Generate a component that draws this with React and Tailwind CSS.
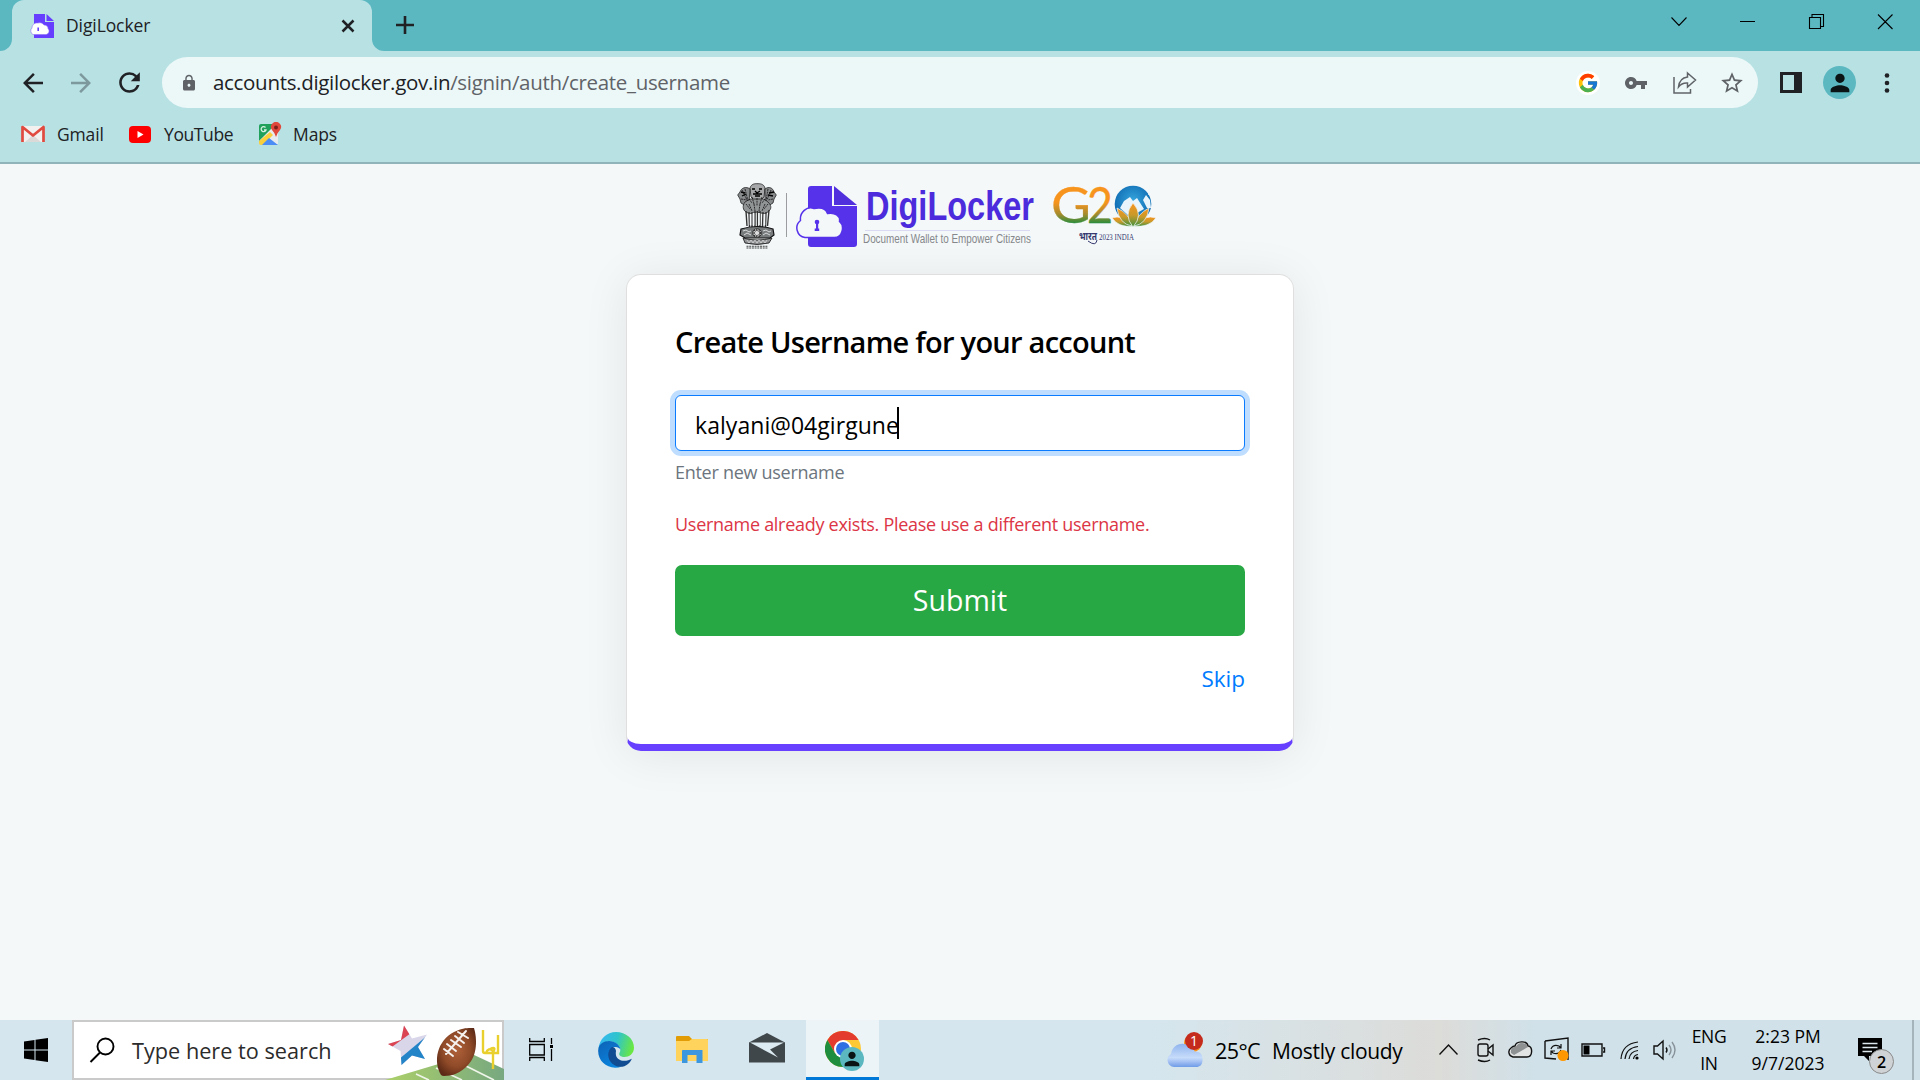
import { MdArrowBack, MdArrowForward, MdRefresh, MdLock, MdVpnKey, MdStarBorder, MdPerson } from "react-icons/md";
import { FcGoogle } from "react-icons/fc";

function DigiMark({ className }) {
  return (
    <svg className={className} viewBox="0 0 63 63">
      <path d="M16 1H37V21H62V59a3 3 0 0 1-3 3H16a3 3 0 0 1-3-3V4a3 3 0 0 1 3-3Z" fill="#5632ea" />
      <path d="M39 1 62 20H39Z" fill="#5030dd" />
      <path d="M10 52.500A9.600 9.600 0 0 1 5.500 35.500C4.500 27 12 21 19 23.500 26 22 31 24 32.500 28.500 40 27 45.500 31 44.500 36.500 50 41 47.500 52.500 39.500 52.500Z" fill="#f4f8f9" stroke="#5632ea" strokeWidth="1.500" />
      <circle cx="22" cy="37" r="2.300" fill="#5632ea" />
      <path d="M21 38h2.200v5.500h1V46h-4.500v-2.500H21Z" fill="#5632ea" />
    </svg>
  );
}

function Favicon() {
  return (
    <svg className="size-6 shrink-0" viewBox="0 0 24 24">
      <path d="M4 0H15V8H24V24H4Z" fill="#653eff" />
      <path d="M16.500 0 24 7H16.500Z" fill="#653eff" />
      <path d="M3 20.500A4 4 0 0 1 2 14C2 10.500 5 8.500 8 9c3-1 5 .5 6 2 3 0 4 2 4 3.500 2 2 1 6-2 6Z" fill="#fff" stroke="#8b70f5" strokeWidth=".6" />
      <path d="M8.200 13.500V17" stroke="#653eff" strokeWidth="1.600" />
    </svg>
  );
}

function Emblem() {
  return (
    <svg className="-mt-px h-[66px] w-10" viewBox="0 0 40 66" fill="none" stroke="#222" strokeWidth=".8">
      <path d="M13 5C14 1 18 .5 20 .7 23 .5 27 1 28 5L27 14 24 17H17L14 14Z" fill="#a5a7a8" />
      <path d="M13 6C9 3 4 5 3 9L.7 12 3 16 4 20 9 23 12 20ZM28 6c4-3 8-1 9 3l2.300 3L37 16l-1 4-5 3-3-3Z" fill="#888b8c" />
      <path d="M8 19C5 23 6 27 9 29L13 31 20 29 28 31 32 28C35 25 34 22 31 19L27 16H13Z" fill="#929596" />
      <path d="M15 6h3M22 6h3M18 8l2 2 3-2M16 11h9M18 13h5M4 9l4 1M5 13l4-2M32 10l5-1M31 12l5 1" stroke="#000" strokeWidth="1.300" />
      <path d="M5 7l5 10M8 6l3 12M4 16l6 1M34 7l-4 10M31 6l-2 12M36 16l-5 1M12 16l3 4M15 14l2 7M28 16l-3 4M25 14l-2 7M20 15v8M9 21l4 5M31 21l-4 5M12 21l3 7M28 21l-3 7M17 21l1 7M23 21l-1 7" stroke="#111" strokeDasharray="2 .7" />
      <path d="M9 28 10 43M12 29 12.500 44M15 29 15 44M18 28 18 44M20.500 28V44M23 28V44M26 29 25.500 44M29 29 28.500 44M32 27 30.500 43" stroke="#333" strokeWidth="1.400" />
      <path d="M13.500 31v11M16.500 30v12M22 30v12M27.500 31v11" stroke="#f4f8f9" strokeWidth="1.500" />
      <path d="M4 46Q20 41 36 46L37 52 33 55H8L3 52Z" fill="#777b7c" stroke="#111" strokeWidth="1.200" />
      <circle cx="20" cy="50" r="4.400" fill="#ddd" />
      <circle cx="20" cy="50" r="3" strokeDasharray=".8 .8" strokeWidth="2" />
      <path d="M6 48l3-1 3 2 2-1M7 52l3-2 4 2M26 48l3-1 3 2 2-1M26 52l3-2 4 2" stroke="#f2f2f2" />
      <path d="M6 55Q20 59 35 55L32 60Q20 63 8 60Z" fill="#909394" stroke="#111" />
      <path d="M10 57l2 3 2-3 2 3 2-3 2 3 2-3 2 3 2-3 2 3 2-3" stroke="#f2f2f2" strokeWidth=".6" />
      <path d="M9.500 63.300h21M9.500 65h21" stroke="#444" strokeDasharray="2 .7" strokeWidth="1.100" />
    </svg>
  );
}

function Wordmark() {
  return (
    <svg className="h-[70px] w-[174px] overflow-visible" viewBox="0 0 174 70" fontFamily="'Liberation Sans', Arial, sans-serif">
      <text x="3" y="38" fontSize="40" fontWeight="700" fill="#4b2bdc" textLength="168" lengthAdjust="spacingAndGlyphs">DigiLocker</text>
      <path d="M2 48.500H167" stroke="#d9d9f2" />
      <text x="0" y="61" fontSize="12.800" fill="#85878a" textLength="168" lengthAdjust="spacingAndGlyphs">Document Wallet to Empower Citizens</text>
    </svg>
  );
}

function G20() {
  return (
    <svg className="h-[70px] w-[104px] overflow-visible" viewBox="0 0 104 70">
      <defs>
        <linearGradient id="g20" gradientUnits="userSpaceOnUse" x1="0" y1="4" x2="0" y2="40">
          <stop offset=".4" stopColor="#f7941e" /><stop offset=".72" stopColor="#a78b2c" /><stop offset="1" stopColor="#1f8d3e" />
        </linearGradient>
        <linearGradient id="petal" x1="0" y1="0" x2="0" y2="1">
          <stop offset="0" stopColor="#f7941e" /><stop offset=".5" stopColor="#c99a2a" /><stop offset="1" stopColor="#3d9140" />
        </linearGradient>
        <radialGradient id="globe" cx=".5" cy=".4" r=".6">
          <stop offset="0" stopColor="#35a4dc" /><stop offset="1" stopColor="#0b66ae" />
        </radialGradient>
      </defs>
      <g fontFamily="Lato, sans-serif" fontSize="51" fontWeight="400" fill="url(#g20)" stroke="url(#g20)" strokeWidth=".3">
        <text x="-2" y="39" textLength="40" lengthAdjust="spacingAndGlyphs">G</text>
        <text x="34" y="39" textLength="26" lengthAdjust="spacingAndGlyphs">2</text>
      </g>
      <circle cx="80" cy="20" r="18.300" fill="url(#globe)" />
      <path d="M67 24 71 17 77 13 80 17 84 14 91 25 84 29 79 25 76 32ZM93 11 97 16 98 24 94 24 92 20 90 16ZM95 8l2 2-2 1Z" fill="#e8f4fb" />
      <g fill="url(#petal)" stroke="#f4f8f9" strokeWidth=".7">
        <path d="M59 34Q69 30 80 42 66 44 59 34ZM103 34Q92 30 80 42 96 44 103 34Z" />
        <path d="M64 24Q77 30 79 42 66 40 64 24ZM96 24Q84 30 81 42 94 40 96 24Z" />
        <path d="M80 19Q91 31 80 43 70 31 80 19Z" />
      </g>
      <g fill="#34386f">
        <text x="26" y="56" fontFamily="'Noto Sans Devanagari', 'Noto Sans', sans-serif" fontSize="10.500" fontWeight="700" textLength="18" lengthAdjust="spacingAndGlyphs">भारत</text>
        <text x="46" y="56" fontFamily="'Liberation Serif', serif" fontSize="8.500" textLength="35" lengthAdjust="spacingAndGlyphs">2023 INDIA</text>
      </g>
      <path d="M35 57Q43 63 44 56" fill="none" stroke="#34386f" />
    </svg>
  );
}

function Gmail() {
  return (
    <svg className="h-[18px] w-6" viewBox="0 0 24 18">
      <path d="M2 1H22V17H2Z" fill="#f2f1ef" /><path d="M4 17 12 10 20 17Z" fill="#dcdad8" />
      <path d="M1.500 17V2L12 10.500 22.500 2V17" fill="none" stroke="#e04a3f" strokeWidth="2.700" strokeLinejoin="round" />
    </svg>
  );
}

function MapsIcon() {
  return (
    <svg className="size-6" viewBox="0 0 24 24">
      <path d="M2 3H20V22H2Z" fill="#e8ebed" /><path d="M1 4Q1 2 3 2H18L1 19Z" fill="#1fa05b" />
      <path d="M1 19 12 10 15 13 5 23H3Q1 23 1 21Z" fill="#f9cf3b" /><path d="M4 23 11 16 20 23Z" fill="#4c8df5" />
      <path d="M7.500 5.500A2.500 2.500 0 1 0 8 8H6" fill="none" stroke="#d6f0df" strokeWidth="1.300" />
      <path d="M18 15Q17 11 14 8A5 5 0 1 1 22 8Q19 11 18 15Z" fill="#e0483c" /><circle cx="18" cy="5.500" r="2" fill="#7c201a" />
    </svg>
  );
}

function Edge() {
  return (
    <svg className="size-9" viewBox="0 0 36 36">
      <defs>
        <linearGradient id="e1" x1="0" y1=".3" x2="1" y2=".5"><stop offset="0" stopColor="#35b7f3" /><stop offset=".5" stopColor="#2fc4cb" /><stop offset="1" stopColor="#6be83f" /></linearGradient>
        <linearGradient id="e2" x1="0" y1="0" x2=".6" y2="1"><stop offset="0" stopColor="#0d62b5" /><stop offset="1" stopColor="#0a84de" /></linearGradient>
      </defs>
      <path d="M.5 17C1 7 9 0 18 0c10 0 18 7 18 15.500C36 22 31 25 26.500 25 22 25 20.500 22.500 21.500 21 25 15 18 9 11 9.500 6 10 2 13 .5 17Z" fill="url(#e1)" />
      <path d="M.2 18C.5 12 6 9 11 9c6 0 11 4 11.500 8.500C20 13.500 13 14 11.500 20 10 28 17 34.500 24 34.500 11 39-.5 30 .2 18Z" fill="url(#e2)" />
      <path d="M14 15C10 18 9 24 12 29c4 6 12 8 18 3 2-1.500 3.500-4 3.800-5.200C28 30.500 16 30 18 19c0-2-2-4.500-4-4Z" fill="#114b91" />
    </svg>
  );
}

function Chrome() {
  return (
    <svg className="size-9" viewBox="0 0 36 36">
      <circle cx="18" cy="18" r="18" fill="#fcc934" />
      <path d="M2.400 9A18 18 0 0 1 33.600 9H18V18L10.200 22.500Z" fill="#e33b2e" />
      <path d="M2.400 9A18 18 0 0 0 18 36L25.800 22.500 18 18 10.200 22.500Z" fill="#1e8e3e" />
      <circle cx="18" cy="18" r="9" fill="#fff" /><circle cx="18" cy="18" r="7" fill="#2f6fe4" />
    </svg>
  );
}

function Football() {
  return (
    <svg className="h-[60px] w-[122px]" viewBox="0 0 122 60">
      <defs>
        <linearGradient id="field"><stop offset="0" stopColor="#acd069" /><stop offset="1" stopColor="#77a880" /></linearGradient>
        <radialGradient id="ball" cx=".5" cy=".45" r=".6"><stop offset="0" stopColor="#b0623a" /><stop offset=".6" stopColor="#8f4a28" /><stop offset="1" stopColor="#5c2a16" /></radialGradient>
        <clipPath id="star"><path d="M22 5.500 30 18.500 45 14.500 36 27 43 39 30 35.500 19.500 45 18.500 31 6 24 19 20Z" /></clipPath>
      </defs>
      <path d="M3 60 90 34 122 49V60Z" fill="url(#field)" />
      <path d="M34 54 47 60M54 48 80 60M84 46 112 60" stroke="#eef5e8" strokeWidth="1.700" />
      <g clipPath="url(#star)"><path d="M0 0H50V50H0Z" fill="#d9d6ea" /><path d="M0 34 36 8V0H0Z" fill="#da4453" /><path d="M10 45 47 14V50H10Z" fill="#2484c8" /></g>
      <g transform="translate(2 0)">
        <path d="M57 55C49 41 53 21 70 12c9-5 17-4 20-4 3 10 4 27-6 37-7 8-16 11-24 11q-2 0-3-1Z" fill="url(#ball)" />
        <path d="M82 11 62 34M74 12l10 6M71 16l9 7M67 20l10 7M63 24l9 7M60 29l9 7" fill="none" stroke="#f5f2ef" strokeWidth="2" strokeLinecap="round" />
        <path d="M99 10V31Q99 33 101 33H114V15M109 49V31Q104 27 102 33M109 32Q113 26 106 29" fill="none" stroke="#ead02f" strokeWidth="2.400" />
      </g>
    </svg>
  );
}

function Slot({ children, active }) {
  return (
    <div className={active ? "relative flex h-full w-[73px] items-center justify-center border-b-[3px] border-[#0078d7] bg-[#edf4f7]" : "flex h-full w-[73px] items-center justify-center"}>
      {children}
    </div>
  );
}

export default function App() {
  return (
    <div className="flex h-[1080px] w-[1920px] flex-col overflow-hidden bg-[#f4f8f9] font-['Open_Sans','Noto_Sans',sans-serif] text-[#202124]">
      {/* Tab strip */}
      <div className="flex h-[51px] shrink-0 bg-[#5bb8c1]">
        <div className="w-3 bg-[#b8e1e4]"><div className="h-full rounded-br-[12px] bg-[#5bb8c1]" /></div>
        <div className="flex w-[360px] items-center rounded-t-[12px] bg-[#b8e1e4] pl-[18px] pr-[17px]">
          <Favicon />
          <span className="ml-3 text-[17.5px] tracking-[-0.1px]">DigiLocker</span>
          <svg className="ml-auto size-[14px]" viewBox="0 0 14 14"><path d="M1.500 1.500 12.500 12.500M12.500 1.500 1.500 12.500" stroke="#202124" strokeWidth="2.500" /></svg>
        </div>
        <div className="w-3 bg-[#b8e1e4]"><div className="h-full rounded-bl-[12px] bg-[#5bb8c1]" /></div>
        <svg className="ml-3 mt-4 size-[18px]" viewBox="0 0 18 18"><path d="M9 0V18M0 9H18" stroke="#202124" strokeWidth="2.600" /></svg>
        <svg className="ml-auto mr-[27px] mt-3 h-5 w-[222px]" viewBox="0 0 222 20" fill="none" stroke="#000" strokeWidth="1.100">
          <path d="M.5 5.500 8 13.500 15.500 5.500M69 9.500H84M141 5.500V2.500H152.500V14.500H149.500M138.500 5.500H149.500V16.500H138.500ZM207 2.500 221.500 17M221.500 2.500 207 17" />
        </svg>
      </div>

      {/* Address bar */}
      <div className="flex h-[63px] shrink-0 items-center bg-[#b8e1e4] pl-[18px]">
        <MdArrowBack className="size-[30px]" />
        <MdArrowForward className="ml-[18px] size-[30px] text-[#7d999d]" />
        <MdRefresh className="ml-[18px] size-[31px]" />
        <div className="ml-[17px] flex h-[51px] w-[1596px] items-center rounded-full bg-[#ecf8f8] pl-[18px] text-[#5f6368]">
          <MdLock className="size-[18px]" />
          <span className="ml-[15px] whitespace-nowrap text-[20.5px] tracking-[-0.31px]"><span className="text-[#202124]">accounts.digilocker.gov.in</span>/signin/auth/create_username</span>
          <div className="ml-auto mr-[13px] flex items-center">
            <span className="flex size-6 items-center justify-center rounded-full bg-white"><FcGoogle className="size-[22px]" /></span>
            <MdVpnKey className="ml-6 size-6" />
            <svg className="ml-[25px] size-6" viewBox="0 0 24 24" fill="none" stroke="currentColor" strokeWidth="1.500"><path d="M1 6V22H17.500V18M14.500 2 22.500 9 14.500 16V12Q9 11.500 5.500 16 6.500 7 14.500 6Z" /></svg>
            <MdStarBorder className="ml-[22px] size-[26px]" />
          </div>
        </div>
        <svg className="ml-[22px] h-[21px] w-[22px]" viewBox="0 0 22 21"><path d="M0 0H22V21H0ZM3 3V18H14V3Z" fill="#202124" fillRule="evenodd" /></svg>
        <span className="ml-[21px] flex size-[33px] items-center justify-center rounded-full bg-[#5bb8c1]"><MdPerson className="size-7 text-[#0a1414]" /></span>
        <svg className="ml-7 h-5 w-[6px]" viewBox="0 0 6 20" fill="#202124"><circle cx="3" cy="2.500" r="2.300" /><circle cx="3" cy="10" r="2.300" /><circle cx="3" cy="17.500" r="2.300" /></svg>
      </div>

      {/* Bookmarks */}
      <div className="flex h-[50px] shrink-0 items-start border-b-2 border-[#8fb4b9] bg-[#b8e1e4] pl-[21px] pt-2 text-[17.5px]">
        <div className="flex h-[24px] w-[108px] items-center gap-3"><Gmail /><span className="tracking-[-0.15px]">Gmail</span></div>
        <div className="flex h-[24px] w-[129px] items-center gap-[13px]">
          <svg className="h-[17px] w-[22px]" viewBox="0 0 22 17"><rect width="22" height="17" rx="4" fill="#f00" /><path d="M8.500 5 14.500 8.500 8.500 12Z" fill="#fff" /></svg>
          <span className="tracking-[-0.4px]">YouTube</span>
        </div>
        <div className="flex h-[24px] items-center gap-[11px]"><MapsIcon /><span className="tracking-[-0.1px]">Maps</span></div>
      </div>

      {/* Page */}
      <main className="flex grow flex-col">
        <div className="flex h-[110px] pl-[737px] pt-5">
          <Emblem />
          <div className="ml-[9px] mt-[9px] h-11 w-px bg-[#9a9ca0]" />
          <DigiMark className="ml-2 mt-px size-[63px]" />
          <div className="ml-[5px] -mt-[2px]"><Wordmark /></div>
          <div className="ml-4"><G20 /></div>
        </div>
        <section className="ml-[626px] h-[477px] w-[668px] rounded-[15px] border border-b-[7px] border-[#dfdfdf] border-b-[#673fff] bg-white px-12 pt-[49px] shadow-[0_4px_46px_rgba(0,0,0,0.08)]">
          <h1 className="h-9 whitespace-nowrap text-[29px] font-semibold leading-9 tracking-[-0.74px] text-black">Create Username for your account</h1>
          <div className="mt-[35px] flex h-14 items-center rounded-[6px] border border-[#0a7bff] bg-white pl-[19px] text-[23px] text-black shadow-[0_0_0_5px_#bfdeff]">
            <span className="pt-1 tracking-[0.05px]">kalyani@04girgune</span><span className="-ml-[2px] h-8 w-[2px] bg-black" />
          </div>
          <p className="mt-[7px] h-7 text-[18px] leading-7 tracking-[-0.28px] text-[#6c757d]">Enter new username</p>
          <p className="mt-6 h-7 whitespace-nowrap text-[18px] leading-7 tracking-[-0.28px] text-[#dc3545]">Username already exists. Please use a different username.</p>
          <button className="mt-[27px] h-[71px] w-full rounded-[7px] bg-[#28a745] text-[28.5px] text-white">Submit</button>
          <p className="mt-[25px] h-9 text-right text-[22.5px] leading-9 text-[#007bff]">Skip</p>
        </section>
      </main>

      {/* Taskbar */}
      <footer className="flex h-[60px] shrink-0 items-center bg-linear-to-r from-[#d5e6ee] from-60% via-[#dcdcd9] via-75% to-[#d0e1e9] to-80% text-black">
        <div className="flex w-[72px] justify-center">
          <svg className="size-6" viewBox="0 0 24 24"><path d="M0 3.500 10.500 2V11.500H0ZM11.500 1.800 24 0V11.500H11.500ZM0 12.500H10.500V22L0 20.500ZM11.500 12.500H24V24L11.500 22.200Z" /></svg>
        </div>
        <div className="relative flex h-full w-[432px] items-center border-2 border-[#cacaca] bg-white pl-[15px]">
          <svg className="size-[26px]" viewBox="0 0 26 26" fill="none" stroke="#000" strokeWidth="1.900"><circle cx="16.500" cy="9.500" r="8" /><path d="M11 15.500 1.500 25" /></svg>
          <span className="ml-[17px] whitespace-nowrap pt-[3px] text-[21.7px] text-[#2b2b2b]">Type here to search</span>
          <div className="absolute -bottom-0.5 -right-0.5"><Football /></div>
        </div>
        <div className="flex h-full gap-[2.5px]">
          <Slot><svg className="size-6" viewBox="0 0 24 24" fill="none" stroke="#000" strokeWidth="1.300"><path d="M.7 0V3.500H15.300V0M.7 6.500H15.300V17H.7ZM.7 23V19.500H15.300V23M22.500 0V6M22.500 11V23" /><path d="M21 7h3v3h-3z" fill="#000" stroke="none" /></svg></Slot>
          <Slot><Edge /></Slot>
          <Slot><svg className="h-7 w-8" viewBox="0 0 32 28"><path d="M0 1Q0 0 1 0H13L16 3H32V10H0Z" fill="#e29c05" /><path d="M0 5H13L16 3H31Q32 3 32 4V25H0Z" fill="#ffd35c" /><path d="M6 27V14.500Q6 14 7 14H26.500V27H20.500V19H11.500V27Z" fill="#3c97df" /></svg></Slot>
          <Slot><svg className="-mt-1 h-[30px] w-9" viewBox="0 0 36 30"><path d="M18 0 36 9.500V29.500H0V9.500Z" fill="#40474a" /><path d="M1 9.500H35L21 16.500 29 24.500Z" fill="#dcebf1" /></svg></Slot>
          <Slot active><Chrome /><span className="absolute left-[34px] top-[27px] flex size-6 items-center justify-center rounded-full bg-[#5bb8c1]"><MdPerson className="size-[22px] text-[#0a1414]" /></span></Slot>
        </div>
        <svg className="ml-[288px] h-[38px] w-10" viewBox="0 0 40 38">
          <defs><linearGradient id="cl" x1="0" y1="0" x2="0" y2="1"><stop offset="0" stopColor="#8fb4ee" /><stop offset=".6" stopColor="#c8dcfa" /><stop offset="1" stopColor="#6f9be8" /></linearGradient></defs>
          <circle cx="26" cy="12" r="9" fill="#f6921e" />
          <path d="M7 36A7 7 0 0 1 4 23C5 16 11 12 17 13c6 0 9 3 11 8 5-1 8 3 7.500 8 0 5-3 7-6 7Z" fill="url(#cl)" />
          <circle cx="27" cy="10" r="9" fill="#c42b1c" /><text x="27" y="15" textAnchor="middle" fontSize="14" fill="#fff">1</text>
        </svg>
        <span className="ml-[8px] pt-[3px] text-[21.5px] tracking-[-0.6px]">25°C</span>
        <span className="ml-3 whitespace-nowrap pt-[3px] text-[21px] tracking-[-0.3px]">Mostly cloudy</span>
        <svg className="ml-auto h-[34px] w-[240px]" viewBox="0 0 240 34" fill="none" stroke="#111" strokeWidth="1.400">
          <path d="M.5 21.500 9.500 12 18.500 21.500" />
          <rect x="39" y="11" width="10" height="12" rx="2" /><path d="M49 16l5-4v10l-5-4M39 7q7-3 12 0M39 27q7 3 12 0" />
          <path d="M74 24A5 5 0 0 1 72 15Q74 13 76 13C77 8 88 7 89 13 94 13 94 24 88 24Z" fill="#e2e4e4" />
          <path d="M72 20Q71 14 77 13.500 80 8 87 11L89 14 75 22Z" fill="#8e9293" stroke="none" />
          <path d="M106 8 129 5V27M106 8V25L117 26" /><path d="M112 16q2-5 8-3l2 2m0-4v4h-4M122 17q-2 5-8 3l-2-2m0 4v-4h4" strokeWidth="1.200" />
          <circle cx="124" cy="22.500" r="5.500" fill="#ff9800" stroke="none" />
          <path d="M143 11H163V23H143ZM164 15h1.500v4H164" /><path d="M144.500 12.500h6v9h-6z" fill="#000" stroke="none" />
          <path d="M182 26Q183 11 199 9M186 26Q187 15 199 13.500M190 26Q191 18.500 199 17.500M194.500 26Q195 22 199 21.500" strokeWidth="1.200" /><circle cx="198" cy="25" r="1.600" fill="#000" stroke="none" />
          <path d="M215 13h3.500l5.500-5v18l-5.500-5H215ZM227 14.500q2 2.500 0 5" /><path d="M230 12q4 5 0 10M233 9q6 8 0 16" stroke="#879299" />
        </svg>
        <div className="ml-3 w-9 text-center text-[17.5px] leading-[27px] tracking-[-0.4px]"><p>ENG</p><p>IN</p></div>
        <div className="ml-[22px] w-[78px] whitespace-nowrap text-center text-[17.5px] leading-[27px]"><p>2:23 PM</p><p>9/7/2023</p></div>
        <div className="relative ml-[31px] h-9 w-[54px]">
          <svg className="mt-[6px] h-[24px] w-[24px]" viewBox="0 0 24 24"><path d="M0 0H24V18H11V23L6 18H0Z" /><path d="M4.500 5.500H19.500M4.500 9.500H19.500M4.500 13.500H14" stroke="#dbe7ec" strokeWidth="1.500" /></svg>
          <span className="absolute left-[11px] top-[17px] flex size-[25px] items-center justify-center rounded-full border border-[#8a8a8a] bg-[#cfd3d5] text-[16px] font-semibold">2</span>
        </div>
        <div className="mr-[6px] h-full w-[2px] bg-[#a5b3ba]" />
      </footer>
    </div>
  );
}
